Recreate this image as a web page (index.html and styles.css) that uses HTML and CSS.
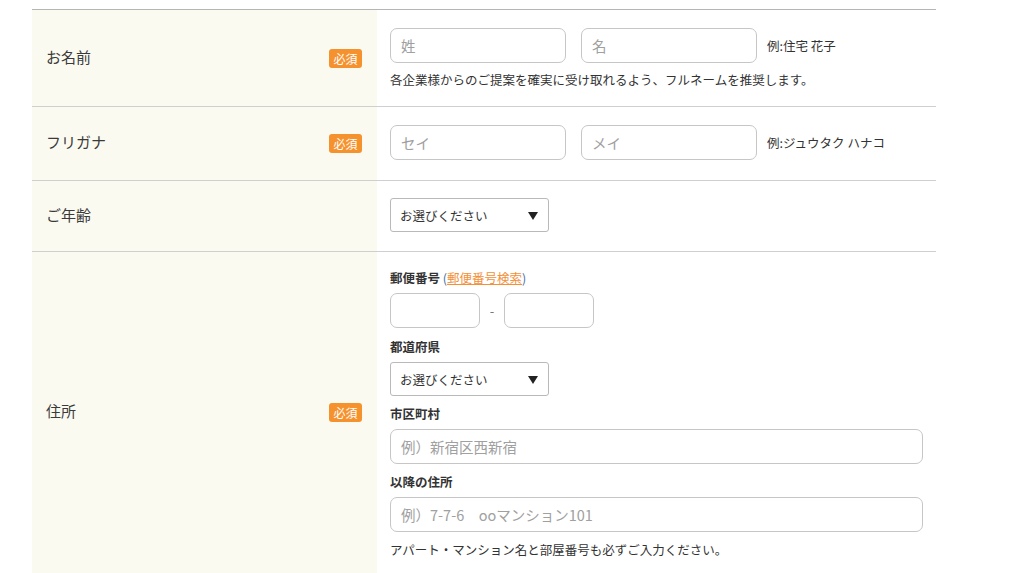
FILE: index.html
```html
<!DOCTYPE html>
<html lang="ja">
<head>
<meta charset="utf-8">
<title>フォーム</title>
<link rel="stylesheet" href="styles.css">
</head>
<body>
<div class="form">
  <div class="row">
    <div class="label"><span class="label-text">お名前</span><span class="badge">必須</span></div>
    <div class="value row1">
      <div class="inline">
        <input class="txt half" type="text" placeholder="姓">
        <input class="txt half" type="text" placeholder="名">
        <span class="example">例:住宅 花子</span>
      </div>
      <p class="note">各企業様からのご提案を確実に受け取れるよう、フルネームを推奨します。</p>
    </div>
  </div>
  <div class="row">
    <div class="label"><span class="label-text">フリガナ</span><span class="badge">必須</span></div>
    <div class="value row2">
      <div class="inline">
        <input class="txt half" type="text" placeholder="セイ">
        <input class="txt half" type="text" placeholder="メイ">
        <span class="example">例:ジュウタク ハナコ</span>
      </div>
    </div>
  </div>
  <div class="row">
    <div class="label"><span class="label-text">ご年齢</span></div>
    <div class="value row3">
      <div class="select-wrap">
        <select class="sel"><option>お選びください</option></select>
      </div>
    </div>
  </div>
  <div class="row">
    <div class="label"><span class="label-text">住所</span><span class="badge">必須</span></div>
    <div class="value row4">
      <div class="group first">
        <div class="sub">郵便番号 <span class="paren">(</span><a class="link" href="#">郵便番号検索</a><span class="paren">)</span></div>
        <div class="inline zip">
          <input class="txt zipbox" type="text">
          <span class="dash">-</span>
          <input class="txt zipbox" type="text">
        </div>
      </div>
      <div class="group pref">
        <div class="sub">都道府県</div>
        <div class="select-wrap">
          <select class="sel"><option>お選びください</option></select>
        </div>
      </div>
      <div class="group">
        <div class="sub">市区町村</div>
        <input class="txt wide" type="text" placeholder="例）新宿区西新宿">
      </div>
      <div class="group">
        <div class="sub">以降の住所</div>
        <input class="txt wide" type="text" placeholder="例）7-7-6　ooマンション101">
      </div>
      <p class="note last">アパート・マンション名と部屋番号も必ずご入力ください。</p>
    </div>
  </div>
</div>
</body>
</html>
```
FILE: styles.css
```css
* { box-sizing: border-box; }
html, body { margin: 0; padding: 0; background: #fff; }
body {
  font-family: "Noto Sans CJK JP", "Noto Sans", sans-serif;
  color: #333;
}
.form {
  width: 904px;
  margin: 9px 0 0 32px;
  border-top: 1px solid #b5b5b5;
}
.row {
  display: grid;
  grid-template-columns: 345px 559px;
  border-bottom: 1px solid #cfcfcf;
}
.label {
  background: #fbfaf1;
  display: flex;
  align-items: center;
  justify-content: space-between;
  padding: 0 15px 0 14px;
}
.label-text {
  font-size: 15px;
  line-height: 20px;
  color: #3a3a3a;
  margin-bottom: 3px;
}
.badge {
  display: inline-block;
  width: 33px;
  height: 19px;
  line-height: 19px;
  text-align: center;
  background: #f6922e;
  color: #fff;
  font-size: 12px;
  border-radius: 3px;
}
.value {
  padding: 18px 13px 16px 13px;
}
.row2 { padding-bottom: 20px; }
.row3 { padding-top: 17px; padding-bottom: 19px; }
.row4 { padding-top: 16px; padding-bottom: 13px; }
.inline {
  display: flex;
  align-items: center;
}
.txt {
  height: 35px;
  border: 1px solid #c6c6c6;
  border-radius: 7px;
  padding: 0 10px;
  font-family: inherit;
  font-size: 14.5px;
  color: #333;
  background: #fff;
  outline: none;
  display: block;
}
.txt::placeholder { color: #a0a0a0; }
.half { width: 176px; margin-right: 15px; }
.half + .half { margin-right: 10px; }
.example { font-size: 12.5px; color: #333; }
.note {
  margin: 7px 0 0;
  font-size: 12.5px;
  line-height: 20px;
  color: #333;
}
.note.last { margin-top: 8px; }
.select-wrap {
  position: relative;
  width: 159px;
}
.select-wrap::after {
  content: "";
  position: absolute;
  right: 11px;
  top: 14px;
  border-left: 5px solid transparent;
  border-right: 5px solid transparent;
  border-top: 8px solid #222;
  pointer-events: none;
}
.sel {
  appearance: none;
  -webkit-appearance: none;
  width: 159px;
  height: 34px;
  border: 1px solid #b9b9b9;
  border-radius: 3px;
  background: #fff;
  padding: 0 9px;
  font-family: inherit;
  font-size: 12.5px;
  color: #333;
  display: block;
}
.group { margin-top: 8px; }
.group.pref { margin-top: 9px; }
.group.first { margin-top: 0; }
.sub {
  font-size: 12.5px;
  font-weight: bold;
  line-height: 20px;
  margin-bottom: 5px;
  color: #333;
}
.paren { color: #4a6fa3; font-weight: normal; }
.link {
  color: #f39039;
  text-decoration: underline;
  font-weight: normal;
}
.zipbox { width: 90px; }
.dash {
  width: 24px;
  text-align: center;
  font-size: 13px;
  color: #777;
}
.wide { width: 533px; }
```
